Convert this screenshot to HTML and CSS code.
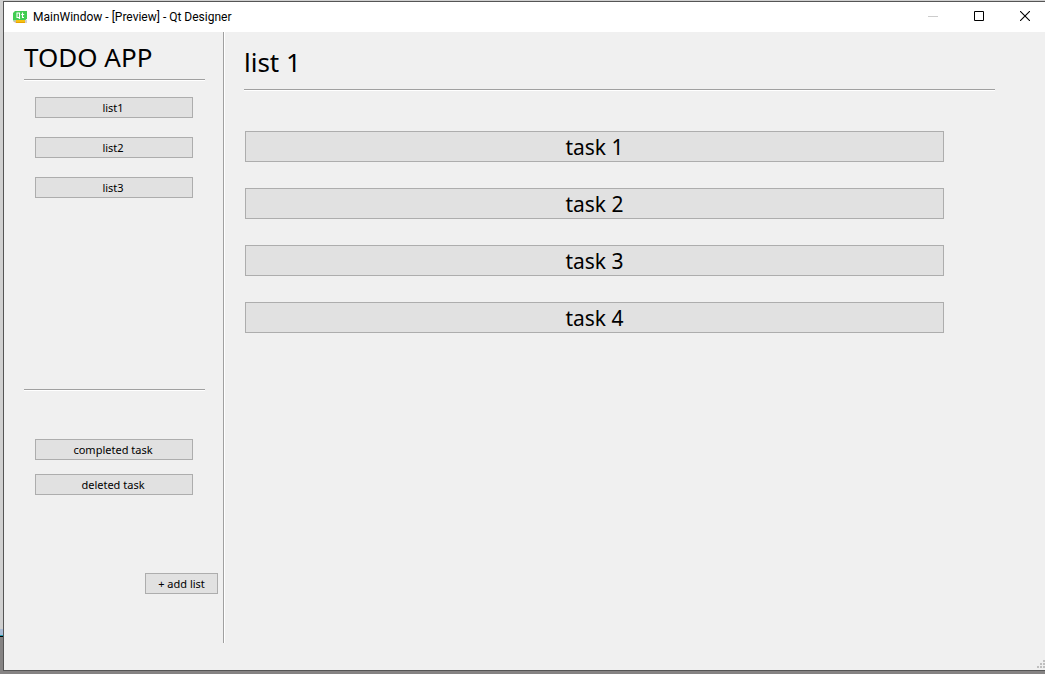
FILE: index.html
```html
<!DOCTYPE html>
<html lang="en">
<head>
<meta charset="utf-8">
<title>MainWindow - [Preview] - Qt Designer</title>
<link rel="stylesheet" href="styles.css">
</head>
<body>
<div class="desktop">
  <div class="window">
    <header class="titlebar">
      <svg class="logo" viewBox="0 0 14 13" aria-hidden="true">
        <path d="M2 0h12v7.500l-2 2H0V2z" fill="#41cd52"/>
        <path d="M4 2h2.500v4.500H4zM5.500 6.500l1.500 1.200M9.500 1.500v5h1.500M8.200 3.500h3" fill="none" stroke="#fff" stroke-width="1.100"/>
        <path d="M0 10.500l3-1.500v3z" fill="#c9bba8"/>
        <path d="M3 9h9v3H3z" fill="#f5c211"/>
        <path d="M3 11h9v1H3z" fill="#e8a300"/>
        <path d="M12 9h2v3h-2z" fill="#d4cfd0"/>
      </svg>
      <span class="caption">MainWindow - [Preview] - Qt Designer</span>
      <div class="controls">
        <button class="control" aria-label="Minimize" disabled><svg viewBox="0 0 10 10"><path d="M0 5.500h10" stroke="#ccc"/></svg></button>
        <button class="control" aria-label="Maximize"><svg viewBox="0 0 10 10"><path d="M.5.5h9v9h-9z" fill="none" stroke="#000"/></svg></button>
        <button class="control" aria-label="Close"><svg viewBox="0 0 10 10"><path d="M0 0l10 10M10 0L0 10" stroke="#000" stroke-width="1.100"/></svg></button>
      </div>
    </header>
    <div class="content">
      <aside class="sidebar">
        <h1 class="heading">TODO APP</h1>
        <hr class="rule">
        <nav class="lists">
          <button class="button">list1</button>
          <button class="button">list2</button>
          <button class="button">list3</button>
        </nav>
        <hr class="rule">
        <div class="archives">
          <button class="button">completed task</button>
          <button class="button">deleted task</button>
        </div>
        <button class="button add">+ add list</button>
      </aside>
      <main class="main">
        <h2 class="heading">list 1</h2>
        <hr class="rule">
        <div class="tasks">
          <button class="button task">task 1</button>
          <button class="button task">task 2</button>
          <button class="button task">task 3</button>
          <button class="button task">task 4</button>
        </div>
      </main>
    </div>
    <footer class="statusbar">
      <svg class="grip" viewBox="0 0 8 8" aria-hidden="true"><path d="M6 0h2v2H6zM3 3h2v2H3zM6 3h2v2H6zM0 6h2v2H0zM3 6h2v2H3zM6 6h2v2H6z" fill="#bfbfbf"/></svg>
    </footer>
  </div>
</div>
</body>
</html>
```
FILE: styles.css
```css
* {
  box-sizing: border-box;
}

body {
  margin: 0;
  color: #000;
  font-family: "Noto Sans", "Open Sans", sans-serif;
  font-size: 11px;
}

.desktop {
  display: flex;
  min-height: 100vh;
  padding: 1px 0 3px 3px;
  background: linear-gradient(to top, #858383 37px, #000 37px, #000 38px, #28a0b4 38px, #28a0b4 39px, #a9bbd5 39px, #a9bbd5 45px, #d0d0d0 45px);
}

.window {
  display: flex;
  flex: 1;
  flex-direction: column;
  border: 1px solid #555;
  border-right: 0;
  background: #f0f0f0;
}

.titlebar {
  display: flex;
  align-items: center;
  height: 30px;
  padding-left: 9px;
  background: #fff;
}

.logo {
  width: 14px;
  height: 13px;
}

.caption {
  margin-left: 6px;
  font-family: Roboto, sans-serif;
  font-size: 12px;
  line-height: 16px;
}

.controls {
  display: flex;
  align-self: stretch;
  margin-left: auto;
}

.control {
  display: flex;
  align-items: center;
  justify-content: center;
  width: 46px;
  padding: 0 0 2px 6px;
  border: 0;
  background: transparent;
}

.control svg {
  width: 10px;
  height: 10px;
}

.content {
  display: flex;
  flex: 1;
}

.sidebar {
  display: flex;
  flex-direction: column;
  width: 221px;
  padding: 5px 19px 49px 20px;
  border-right: 1px solid #fff;
  box-shadow: inset -1px 0 #a0a0a0;
}

.heading {
  margin: 0;
  padding-bottom: 2px;
  font-size: 26px;
  font-weight: 400;
  line-height: 40px;
}

.rule {
  width: 100%;
  height: 2px;
  margin: 0;
  border: 0;
  border-top: 1px solid #a0a0a0;
  background: #fff;
}

.lists {
  display: flex;
  flex: 1;
  flex-direction: column;
  gap: 19px;
  padding: 16px 12px 0 11px;
}

.archives {
  display: flex;
  flex-direction: column;
  gap: 14px;
  padding: 48px 12px 78px 11px;
}

.button {
  height: 21px;
  padding: 0 2px 0 0;
  border: 1px solid #adadad;
  background: #e1e1e1;
  color: #000;
  font: inherit;
  line-height: 19px;
}

.add {
  align-self: flex-end;
  width: 73px;
  margin-right: -13px;
  padding: 0;
}

.main {
  flex: 1;
  padding: 10px 50px 0 19px;
}

.main .heading {
  padding-bottom: 7px;
}

.tasks {
  display: flex;
  flex-direction: column;
  gap: 26px;
  padding: 40px 51px 0 1px;
}

.task {
  height: 31px;
  padding: 2px 0 0;
  font-size: 21px;
  line-height: 27px;
}

.statusbar {
  display: flex;
  align-items: flex-end;
  justify-content: flex-end;
  height: 27px;
  padding-bottom: 2px;
}

.grip {
  width: 8px;
  height: 8px;
}
```
